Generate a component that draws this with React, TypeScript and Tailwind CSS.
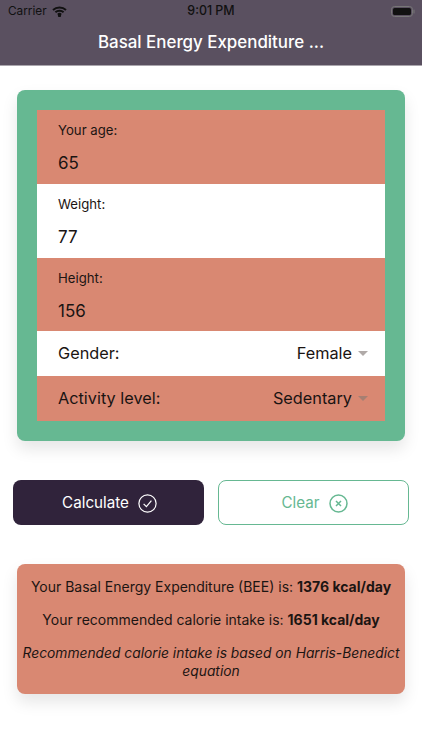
import React from "react";

function Field({ label, value, bg, h }: { label: string; value: string; bg: string; h: string }) {
  return (
    <div className={`${h} pl-[21px] pr-[20px] pt-[12px] ${bg}`}>
      <div className="text-[13.2px] leading-[17px] text-[#1c1512]">{label}</div>
      <div className="mt-[13px] text-[17px] leading-[22px] text-[#1a1412]">{value}</div>
    </div>
  );
}

function Select({ label, value, bg, caret }: { label: string; value: string; bg: string; caret: string }) {
  return (
    <div className={`h-[45px] pl-[21px] pr-[17px] flex items-center justify-between text-[16.3px] text-[#1a1412] ${bg}`}>
      <span>{label}</span>
      <span className="flex items-center gap-[6px]">
        {value}
        <span className={`w-0 h-0 border-x-[5px] border-x-transparent border-t-[5px] ${caret}`} />
      </span>
    </div>
  );
}

export default function App() {
  return (
    <div
      className="w-[422px] h-[750px] bg-white overflow-hidden relative"
      style={{ fontFamily: "Inter, 'Liberation Sans', sans-serif" }}
    >
      <header className="h-[66px] bg-[#5a5060] border-b border-[#aaa6ad] flex flex-col">
        <div className="h-[22px] pt-[1px] relative flex items-center justify-between px-[8px] text-[#111] text-[11.8px]">
          <span className="flex items-center gap-[5px]">
            Carrier
            <svg width="15" height="11" viewBox="0 0 15 11" fill="none" stroke="#111" strokeWidth="1.9">
              <path d="M1 4 C4.5 .6 10.5 .6 14 4" />
              <path d="M3.4 6.3 C5.6 4.2 9.4 4.2 11.6 6.3" />
              <path d="M5.8 8.6 C6.8 7.7 8.2 7.7 9.2 8.6" />
              <circle cx="7.5" cy="9.6" r=".7" fill="#111" />
            </svg>
          </span>
          <span className="absolute left-0 right-0 text-center font-medium text-[12.4px]">9:01 PM</span>
          <svg width="24" height="11" viewBox="0 0 24 11" className="mr-[-1px]">
            <rect x=".5" y=".5" width="21" height="10" rx="3" fill="none" stroke="#777" />
            <rect x="2" y="2" width="18" height="7" rx="1.6" fill="#111" />
            <rect x="22.5" y="3.5" width="1" height="4" rx=".5" fill="#777" />
          </svg>
        </div>
        <div className="flex-1 flex items-center justify-center pb-[2px] text-white font-medium text-[16.9px]">
          Basal Energy Expenditure ...
        </div>
      </header>

      <section className="mx-[17px] mt-[24px] bg-[#66b892] rounded-[8px] p-[20px] shadow-[0_8px_16px_rgba(0,0,0,0.1)]">
        <Field label="Your age:" value="65" bg="bg-[#d98872]" h="h-[74px]" />
        <Field label="Weight:" value="77" bg="bg-white" h="h-[74px]" />
        <Field label="Height:" value="156" bg="bg-[#d98872]" h="h-[73px]" />
        <Select label="Gender:" value="Female" bg="bg-white" caret="border-t-[#b0aaa8]" />
        <Select label="Activity level:" value="Sedentary" bg="bg-[#d98872]" caret="border-t-[#a57f72]" />
      </section>

      <div className="mx-[13px] mt-[39px] flex gap-[14px]">
        <button className="w-[191px] h-[45px] pt-[1px] pl-[2px] rounded-[8px] bg-[#30233b] text-white text-[15.2px] flex items-center justify-center gap-[9px]">
          Calculate
          <svg width="19" height="19" viewBox="0 0 19 19" fill="none" stroke="#fff" strokeWidth="1.2">
            <circle cx="9.5" cy="9.5" r="8.6" />
            <path d="M5.6 9.8 L8.4 12.6 L13.4 6.6" />
          </svg>
        </button>
        <button className="w-[191px] h-[45px] pt-[1px] pl-[2px] rounded-[8px] bg-white border border-[#66b892] text-[#66b892] text-[15.2px] flex items-center justify-center gap-[9px]">
          Clear
          <svg width="19" height="19" viewBox="0 0 19 19" fill="none" stroke="#66b892" strokeWidth="1.5">
            <circle cx="9.5" cy="9.5" r="8.5" />
            <path d="M7 7 L12 12 M12 7 L7 12" />
          </svg>
        </button>
      </div>

      <section className="mx-[17px] mt-[39px] h-[130px] bg-[#d98872] rounded-[8px] pt-[14px] text-center text-[14px] leading-[18px] text-[#1c1512] shadow-[0_8px_16px_rgba(0,0,0,0.1)]">
        <p>
          Your Basal Energy Expenditure (BEE) is: <b className="font-bold">1376 kcal/day</b>
        </p>
        <p className="mt-[15px]">
          Your recommended calorie intake is: <b className="font-bold">1651 kcal/day</b>
        </p>
        <p className="mt-[15px] italic text-[13.8px]">Recommended calorie intake is based on Harris-Benedict equation</p>
      </section>
    </div>
  );
}
